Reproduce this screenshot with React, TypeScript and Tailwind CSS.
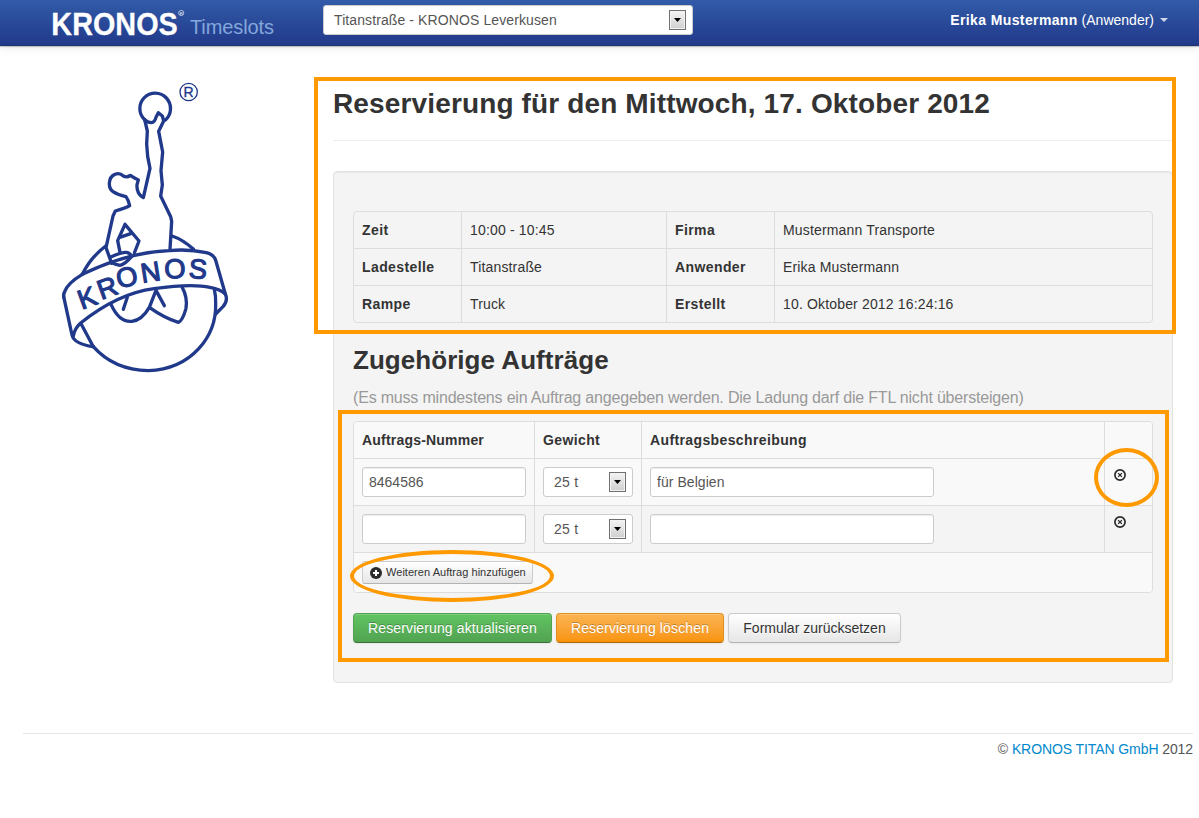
import React from "react";

const INK = "#21398a";

function Emblem() {
  return (
    <svg viewBox="0 0 570 930" width="190" height="310" fill="none" stroke={INK} strokeWidth="10" strokeLinejoin="round" strokeLinecap="round" role="img" aria-label="Kronos">
      <circle cx="416" cy="66" r="26" strokeWidth="4" />
      <text x="416" y="81" textAnchor="middle" fontFamily="Liberation Sans, sans-serif" fontSize="42" fill={INK} stroke={INK} strokeWidth="1">R</text>
      <path d="M284 149A46 46 0 1 1 346 150" />
      <path d="M284 149Q292 158 304 158Q314 157 318 142L325 128L337 138L341 153L326 184L338 246L333 302L337 345L332 378L362 440L365 454L360 538" />
      <path d="M284 149L292 183L290 222Q291 260 300 295L280 383Q259 371 261 344L265 330Q251 323 241 316Q231 324 220 318C211 309 204 309 195 313C173 322 174 355 189 365Q204 375 228 380Q236 390 239 407Q230 413 196 423L189 438L168 533L185 580" />
      <g transform="translate(0 450)">
        <path d="M225 13L203 62L210 97M225 13L267 63L253 99M207 53L242 41" />
        <path d="M184 110Q215 96 229 97Q241 99 245 109Q225 133 210 136Q198 134 186 128" />
        <path d="M97 163Q121 113 167 78M366 48Q397 58 430 87" />
        <path d="M97 163Q235 96 358 92Q414 86 469 98Q492 104 497 121L526 222Q535 242 519 260L497 282" />
        <path d="M97 163Q52 190 44 215Q38 225 43 239L66 345Q72 372 130 380" />
        <path d="M70 348Q74 325 92 309Q204 220 312 206Q425 190 480 202Q512 208 526 222M92 309L130 380" />
        <path d="M130 380Q192 450 295 452C426 447 500 348 497 250Q498 230 493 208" />
        <path d="M183 253Q208 308 246 304Q276 300 298 262L318 211L343 257M298 262Q343 294 385 307Q398 302 408 265Q413 232 397 203M232 232L220 268" />
        <text
          x="95 154 206 277 344 415"
          y="269 240 206 189 176 173"
          rotate="-20 -20 -14 -9 -3 4"
          fontFamily="Liberation Sans, sans-serif"
          fontSize="82"
          fill={INK}
          stroke={INK}
          strokeWidth="3.5"
        >
          KRONOS
        </text>
      </g>
    </svg>
  );
}

function Arrow() {
  return (
    <span className="flex h-5 w-[17px] items-center justify-center border border-[#707070] bg-linear-to-b from-[#f4f4f4] to-[#cfcfcf] shadow-[inset_0_0_0_1px_#f3f3f3]">
      <svg width="7" height="4" viewBox="0 0 7 4"><path d="M0 0H7L3.5 4Z" fill="#000" /></svg>
    </span>
  );
}

function Select({ label, className }: { label: string; className: string }) {
  return (
    <div className={"flex h-[30px] items-center justify-between rounded-[3px] border border-[#ccc] bg-white pr-1.5 pl-2.5 text-[#555] " + className}>
      <span>{label}</span>
      <Arrow />
    </div>
  );
}

function Input({ value, className }: { value: string; className: string }) {
  return (
    <input
      readOnly
      value={value}
      className={"block h-[30px] rounded-[3px] border border-[#ccc] bg-white px-1.5 text-[#555] shadow-[inset_0_1px_1px_rgba(0,0,0,0.075)] outline-none " + className}
    />
  );
}

const details = [
  ["Zeit", "10:00 - 10:45", "Firma", "Mustermann Transporte"],
  ["Ladestelle", "Titanstraße", "Anwender", "Erika Mustermann"],
  ["Rampe", "Truck", "Erstellt", "10. Oktober 2012 16:24:16"],
];

const orders = [
  { number: "8464586", text: "für Belgien", row: "bg-[#f9f9f9]" },
  { number: "", text: "", row: "" },
];

function RemoveIcon() {
  return (
    <svg width="12" height="12" viewBox="0 0 12 12" fill="none" stroke="#2b2b2b">
      <circle cx="6" cy="6" r="5.1" strokeWidth="1.7" />
      <path d="M4.1 4.1L7.9 7.9M7.9 4.1L4.1 7.9" strokeWidth="1.3" />
    </svg>
  );
}

export default function App() {
  return (
    <div className="relative h-[818px] w-[1199px] overflow-hidden bg-white font-['Liberation_Sans',Arial,sans-serif] text-[14px] leading-5 text-[#333]">
      <header className="flex h-[46px] border-b border-[#1f3272] bg-linear-to-b from-[#315ba8] to-[#22398a] shadow-[0_1px_1px_rgba(0,0,0,0.2),0_1px_10px_rgba(0,0,0,0.1)]">
        <div className="flex w-[323px] shrink-0 pl-[51px]">
          <svg width="136" height="45" viewBox="0 0 136 45" fill="#fff" fontFamily="Liberation Sans, sans-serif">
            <g transform="scale(0.9 1)">
              <text x="0.4" y="35" fontSize="32" fontWeight="700" stroke="#fff" strokeWidth="0.3">KRONOS</text>
            </g>
            <circle cx="130.2" cy="13" r="2.6" fill="none" stroke="#fff" strokeWidth="0.6" />
            <text x="130.2" y="14.6" fontSize="4.2" textAnchor="middle">R</text>
          </svg>
          <span className="pt-[17px] pl-[3px] text-[20px] tracking-[-0.1px] text-[#83a8dc]">Timeslots</span>
        </div>
        <Select label="Titanstraße - KRONOS Leverkusen" className="mt-[5px] w-[370px] tracking-[0.1px]" />
        <div className="ml-auto flex items-center pr-[31px] pb-[5px] text-white">
          <span className="whitespace-pre"><b className="tracking-[0.38px]">Erika Mustermann</b> (Anwender)</span>
          <svg className="ml-1.5" width="8" height="4" viewBox="0 0 8 4"><path d="M0 0H8L4 4Z" fill="#cdd6ea" /></svg>
        </div>
      </header>

      <div className="flex h-[687px]">
        <aside className="w-[333px] shrink-0 pt-6 pl-[50px]"><Emblem /></aside>
        <main className="w-[840px]">
          <h1 className="mt-[37px] h-[58px] border-b border-[#eee] pt-px text-[28px] leading-10 font-bold tracking-[0.14px] whitespace-nowrap">Reservierung für den Mittwoch, 17. Oktober 2012</h1>
          <section className="mt-[30px] h-[512px] rounded border border-[#e3e3e3] bg-[#f4f4f4] px-[19px] pt-[39px] shadow-[inset_0_1px_1px_rgba(0,0,0,0.05)]">
            <div className="rounded border border-[#ddd] tracking-[0.16px]">
              {details.map((r, i) => (
                <div key={r[0]} className={"grid grid-cols-[107px_205px_108px_1fr] " + (i ? "h-[37px] border-t border-[#ddd]" : "h-9")}>
                  <b className="p-2 tracking-[0.4px]">{r[0]}</b>
                  <span className="border-l border-[#ddd] p-2">{r[1]}</span>
                  <b className="border-l border-[#ddd] p-2 tracking-[0.4px]">{r[2]}</b>
                  <span className="border-l border-[#ddd] p-2">{r[3]}</span>
                </div>
              ))}
            </div>
            <h2 className="mt-[17px] text-[26px] leading-10 font-bold tracking-[0.05px]">Zugehörige Aufträge</h2>
            <p className="mt-2 text-[16px] leading-5 tracking-[-0.187px] whitespace-nowrap text-[#999]">(Es muss mindestens ein Auftrag angegeben werden. Die Ladung darf die FTL nicht übersteigen)</p>
            <div className="mt-[13px] overflow-hidden rounded border border-[#ddd]">
              <div className="grid h-9 grid-cols-[180px_107px_463px_1fr] bg-[#f9f9f9] font-bold">
                <span className="p-2 tracking-[0.2px]">Auftrags-Nummer</span>
                <span className="border-l border-[#ddd] p-2 tracking-[0.38px]">Gewicht</span>
                <span className="border-l border-[#ddd] p-2 tracking-[0.38px]">Auftragsbeschreibung</span>
                <span className="border-l border-[#ddd]" />
              </div>
              {orders.map((o, i) => (
                <div key={i} className={"grid h-[47px] grid-cols-[180px_107px_463px_1fr] border-t border-[#ddd] " + o.row}>
                  <div className="p-2"><Input value={o.number} className="w-[164px]" /></div>
                  <div className="border-l border-[#ddd] p-2"><Select label="25 t" className="w-[90px] tracking-[0.3px]" /></div>
                  <div className="border-l border-[#ddd] p-2"><Input value={o.text} className="w-[284px] tracking-[0.05px]" /></div>
                  <div className="border-l border-[#ddd] pt-[10px] pl-[9px]"><RemoveIcon /></div>
                </div>
              ))}
              <div className="h-10 border-t border-[#ddd] bg-[#f9f9f9] px-2 pt-2">
                <button className="flex h-[23px] w-[171px] items-center rounded-[3px] border border-[#ccc] border-b-[#b3b3b3] bg-linear-to-b from-white to-[#e6e6e6] pl-[7px] text-[11px] tracking-[0.04px] whitespace-nowrap">
                  <svg className="mr-1 shrink-0" width="12" height="12" viewBox="0 0 12 12"><circle cx="6" cy="6" r="6" fill="#2b2b2b" /><path d="M6 3V9M3 6H9" stroke="#fff" strokeWidth="2" /></svg>
                  <span className="pb-0.5">Weiteren Auftrag hinzufügen</span>
                </button>
              </div>
            </div>
            <div className="mt-5 flex gap-1 whitespace-nowrap">
              <button className="h-[30px] w-[199px] rounded border border-[#51a351] border-b-[#387038] bg-linear-to-b from-[#62c462] to-[#51a351] tracking-[0.12px] text-white shadow-[inset_0_1px_0_rgba(255,255,255,0.2),0_1px_2px_rgba(0,0,0,0.05)] [text-shadow:0_-1px_0_rgba(0,0,0,0.25)]">Reservierung aktualisieren</button>
              <button className="h-[30px] w-[168px] rounded border border-[#e08e1c] border-b-[#ad6704] bg-linear-to-b from-[#fbb450] to-[#f89406] tracking-[0.14px] text-white shadow-[inset_0_1px_0_rgba(255,255,255,0.2),0_1px_2px_rgba(0,0,0,0.05)] [text-shadow:0_-1px_0_rgba(0,0,0,0.25)]">Reservierung löschen</button>
              <button className="h-[30px] w-[173px] rounded border border-[#ccc] border-b-[#b3b3b3] bg-linear-to-b from-white to-[#e6e6e6] shadow-[inset_0_1px_0_rgba(255,255,255,0.2),0_1px_2px_rgba(0,0,0,0.05)] [text-shadow:0_1px_1px_rgba(255,255,255,0.75)]">Formular zurücksetzen</button>
            </div>
          </section>
        </main>
      </div>

      <footer className="mr-1.5 ml-[23px] border-t border-[#e5e5e5] pt-[5px] text-right tracking-[-0.09px] text-[#555]">
        © <a className="text-[#0088cc]">KRONOS TITAN GmbH</a> 2012
      </footer>

      <div className="absolute top-[77px] left-[314px] h-[257px] w-[862px] border-4 border-[#ff9900]" />
      <div className="absolute top-[410px] left-[338px] h-[252px] w-[831px] border-4 border-[#ff9900]" />
      <div className="absolute top-[550px] left-[350px] h-[52px] w-[204px] rounded-[50%] border-4 border-[#ff9900]" />
      <div className="absolute top-[448px] left-[1094px] h-[59px] w-[65px] rounded-[50%] border-4 border-[#ff9900]" />
    </div>
  );
}
